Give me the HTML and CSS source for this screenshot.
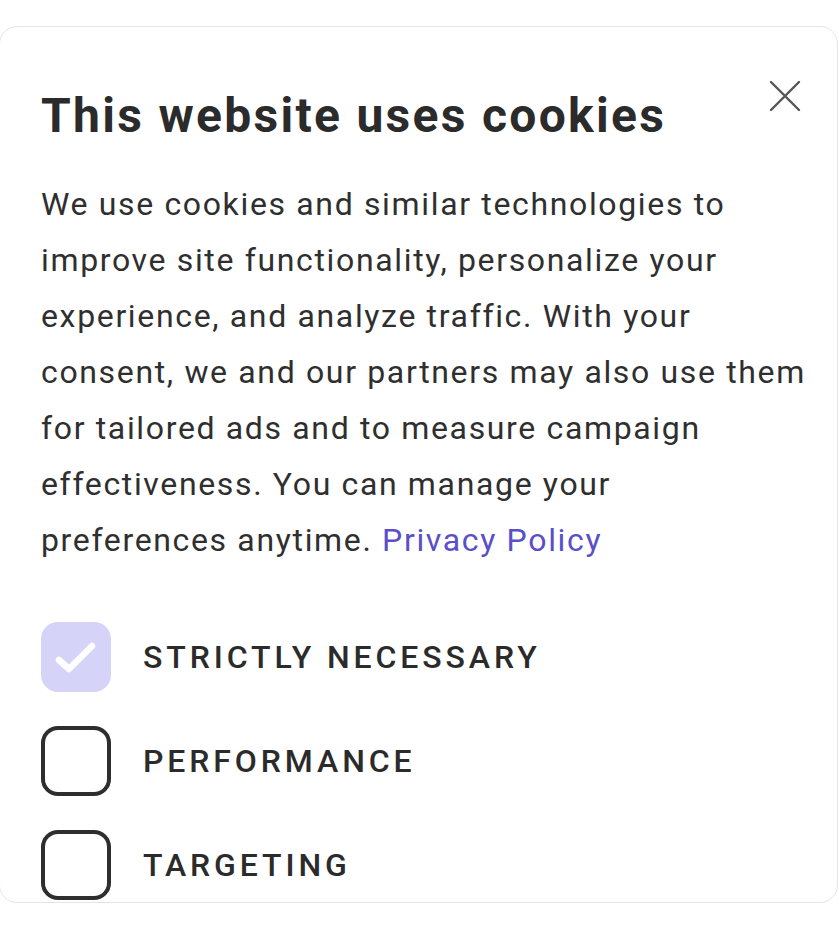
FILE: index.html
```html
<!DOCTYPE html>
<html lang="en">
<head>
<meta charset="utf-8">
<title>Cookies</title>
<link rel="stylesheet" href="styles.css">
</head>
<body>
<div class="page">
  <section class="card">
    <button class="close" aria-label="Close">
      <svg width="32" height="32" viewBox="0 0 32 32"><path d="M2 2 L30 30 M30 2 L2 30" stroke="#555" stroke-width="2.4" fill="none" stroke-linecap="round"/></svg>
    </button>
    <h1 class="title">This website uses cookies</h1>
    <p class="text">We use cookies and similar technologies to improve site functionality, personalize your experience, and analyze traffic. With your consent, we and our partners may also use them for tailored ads and to measure campaign effectiveness. You can manage your<br>preferences anytime. <a class="link" href="#">Privacy Policy</a></p>
    <ul class="options">
      <li class="option">
        <span class="box box-checked">
          <svg width="70" height="70" viewBox="0 0 70 70"><path d="M18 38 L28 47 L51 24" stroke="#fff" stroke-width="6.5" fill="none" stroke-linecap="round" stroke-linejoin="round"/></svg>
        </span>
        <span class="label">STRICTLY NECESSARY</span>
      </li>
      <li class="option">
        <span class="box"></span>
        <span class="label">PERFORMANCE</span>
      </li>
      <li class="option">
        <span class="box"></span>
        <span class="label">TARGETING</span>
      </li>
    </ul>
  </section>
</div>
</body>
</html>
```

FILE: styles.css
```css
* { box-sizing: border-box; }
html, body { margin: 0; padding: 0; background: #fff; }
body { font-family: Roboto, "Noto Sans", Arial, sans-serif; color: #2d2d2d; }
.page { padding-top: 26px; height: 938px; overflow: hidden; }
.card {
  position: relative;
  width: 839px;
  height: 877px;
  margin-left: -1px;
  border: 1px solid #e4e4e4;
  border-radius: 18px;
  padding: 61px 18px 0 41px;
  overflow: hidden;
  background: #fff;
}
.close {
  position: absolute;
  top: 53px;
  right: 36px;
  width: 32px;
  height: 32px;
  padding: 0;
  border: 0;
  background: none;
  display: flex;
}
.title {
  margin: 0;
  font-size: 48px;
  font-weight: 700;
  line-height: 56px;
  letter-spacing: 2.3px;
  color: #2b2b2b;
}
.text {
  margin: 32px 0 0;
  font-size: 32px;
  line-height: 56px;
  font-weight: 400;
  letter-spacing: 1.65px;
  color: #2f2f2f;
}
.link { color: #5a4fc8; text-decoration: none; }
.options {
  list-style: none;
  margin: 54px 0 0;
  padding: 0;
  display: flex;
  flex-direction: column;
  gap: 34px;
}
.option { display: flex; align-items: center; gap: 32px; }
.box {
  width: 70px;
  height: 70px;
  flex: none;
  border: 4px solid #2e2e2e;
  border-radius: 17px;
  display: flex;
}
.box-checked { border: 0; background: #d6d3f8; }
.label {
  font-size: 32px;
  font-weight: 500;
  letter-spacing: 3.9px;
  color: #2b2b2b;
}
```
